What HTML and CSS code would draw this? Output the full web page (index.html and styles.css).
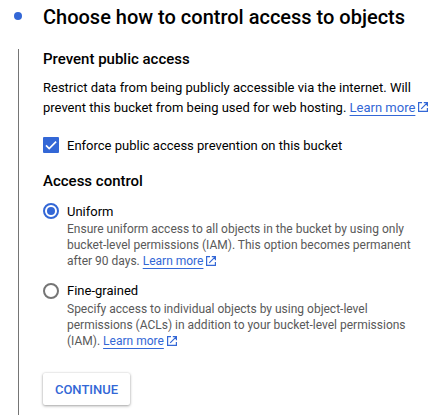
FILE: index.html
```html
<!DOCTYPE html>
<html lang="en">
<head>
<meta charset="utf-8">
<title>Choose how to control access to objects</title>
<link rel="stylesheet" href="styles.css">
</head>
<body>
<svg width="0" height="0" class="defs">
  <symbol id="external" viewBox="0 0 10 10">
    <path d="M4 .6H.6v8.8h8.8V6M5.8.6h3.6v3.6M9.2.8 3.2 6.8" fill="none" stroke="currentColor" stroke-width="1.2"/>
  </symbol>
</svg>
<main class="step">
  <header class="step-header">
    <span class="dot"></span>
    <h1>Choose how to control access to objects</h1>
  </header>
  <div class="step-body">
    <h2>Prevent public access</h2>
    <p class="intro">Restrict data from being publicly accessible via the internet. Will<br>prevent this bucket from being used for web hosting. <a class="link" href="#">Learn more</a><svg class="external"><use href="#external"/></svg></p>
    <label class="option enforce">
      <span class="checkbox"><svg viewBox="0 0 16 16"><path d="M3 8.4 6.2 11.6 13.1 4.7" fill="none" stroke="#fff" stroke-width="1.7"/></svg></span>
      <span class="label">Enforce public access prevention on this bucket</span>
    </label>
    <h2 class="access">Access control</h2>
    <label class="option">
      <span class="radio selected"></span>
      <span class="label">Uniform</span>
    </label>
    <p class="hint">Ensure uniform access to all objects in the bucket by using only<br>bucket-level permissions (IAM). This option becomes permanent<br>after 90 days. <a class="link" href="#">Learn more</a><svg class="external"><use href="#external"/></svg></p>
    <label class="option fine">
      <span class="radio"></span>
      <span>Fine-grained</span>
    </label>
    <p class="hint">Specify access to individual objects by using object-level<br>permissions (ACLs) in addition to your bucket-level permissions<br>(IAM). <a class="link" href="#">Learn more</a><svg class="external"><use href="#external"/></svg></p>
    <button class="continue" type="button">CONTINUE</button>
  </div>
</main>
</body>
</html>
```
FILE: styles.css
```css
* { box-sizing: border-box; }

body {
  margin: 0;
  background: #fff;
  color: #000;
  font-family: Roboto, "Liberation Sans", sans-serif;
  font-size: 13px;
  overflow: hidden;
}

.defs { display: block; }

.step {
  height: 415px;
  display: flex;
  flex-direction: column;
  white-space: nowrap;
}

.step-header {
  display: flex;
  height: 49px;
  padding: 5px 0 0 14px;
}

.dot {
  width: 8px;
  height: 8px;
  margin: 7px 21px 0 0;
  border-radius: 50%;
  background: #3367d6;
}

h1, h2, p { margin: 0; }

h1 {
  font-size: 20px;
  line-height: 24px;
  font-weight: 500;
}

.step-body {
  flex: 1;
  margin-left: 18px;
  padding-left: 24px;
  border-left: 1px solid #757575;
}

h2 {
  font-size: 15px;
  line-height: 20px;
  font-weight: 500;
}

.intro {
  margin-top: 9px;
  line-height: 20px;
}

.option {
  display: flex;
  gap: 8px;
  height: 16px;
  line-height: 16px;
}

.label { padding-top: 1px; }

.enforce { margin-top: 19px; }

.access { margin: 18px 0 12px; }

.fine { margin-top: 14px; }

.checkbox {
  width: 16px;
  height: 16px;
  border-radius: 1px;
  background: #3367d6;
}

.checkbox svg { display: block; }

.radio {
  width: 16px;
  height: 16px;
  border: 2px solid #757575;
  border-radius: 50%;
}

.radio.selected {
  padding: 2px;
  border-color: #3367d6;
}

.radio.selected::before {
  content: "";
  display: block;
  height: 8px;
  border-radius: 50%;
  background: #3367d6;
}

.hint {
  margin: 2px 0 0 24px;
  color: #595959;
  font-size: 12px;
  line-height: 16px;
}

.link {
  color: #3367d6;
  text-decoration: underline 1px;
  text-underline-offset: 3px;
  text-decoration-skip-ink: none;
}

.external {
  width: 10px;
  height: 10px;
  margin-left: 3px;
  color: #3367d6;
  overflow: visible;
}

.hint .external { vertical-align: -1px; }

.continue {
  display: block;
  width: 87px;
  height: 32px;
  margin-top: 24px;
  padding: 1px 0 0;
  border: 0;
  border-radius: 2px;
  background: #fff;
  box-shadow: 0 1px 3px rgba(0, 0, 0, .35), 0 0 2px rgba(0, 0, 0, .12);
  color: #3367d6;
  font: 500 13px/31px Roboto, "Liberation Sans", sans-serif;
}
```
